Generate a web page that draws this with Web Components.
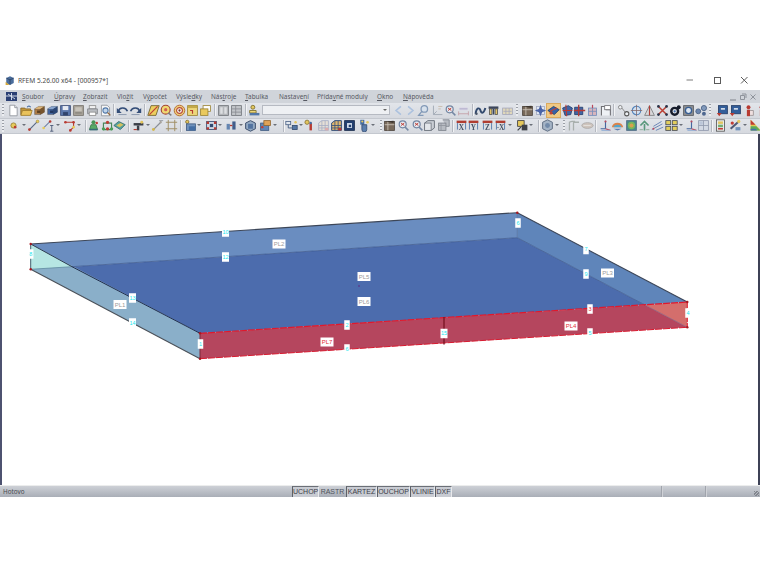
<!DOCTYPE html>
<html lang="cs">
<head>
<meta charset="utf-8">
<title>RFEM</title>
<style>
  html, body { margin: 0; background: #fff; }
  body { padding-top: 70px; height: 500px; overflow: hidden; font-family: "Noto Sans", sans-serif; }
</style>
</head>
<body>
<rfem-window>
  <rfem-titlebar>RFEM 5.26.00 x64 - [000957*]</rfem-titlebar>
  <rfem-menubar>
    <rfem-menu at="22"><u>S</u>oubor</rfem-menu>
    <rfem-menu at="54"><u>Ú</u>pravy</rfem-menu>
    <rfem-menu at="83"><u>Z</u>obrazit</rfem-menu>
    <rfem-menu at="117">Vlo<u>ž</u>it</rfem-menu>
    <rfem-menu at="143">V<u>ý</u>počet</rfem-menu>
    <rfem-menu at="176">Výsle<u>d</u>ky</rfem-menu>
    <rfem-menu at="211">Nás<u>t</u>roje</rfem-menu>
    <rfem-menu at="245"><u>T</u>abulka</rfem-menu>
    <rfem-menu at="279">Nastave<u>n</u>í</rfem-menu>
    <rfem-menu at="317">Přída<u>v</u>né moduly</rfem-menu>
    <rfem-menu at="377"><u>O</u>kno</rfem-menu>
    <rfem-menu at="403"><u>N</u>ápověda</rfem-menu>
  </rfem-menubar>
  <rfem-toolbar items="grip:3 doc:13 open:26 stack:39 stackb:52 save:65 saveg:78 print:92 prev:105 sep:113 undo:122 redo:135 sep:144 para:153 lens:166 target:179 winy:192 winy2:205 sep:214 table:223 table2:236 sep:245 person:254 combo:326 left:398 right:410 mag:423 axes:437 magr:450 dim:463 sep:472 curve:480 bench:493 benchp:507 grip:517 brown:527 star:540 hot:553 cubeb:567 cuber:579 gridp:592 frame:605 sep:613 rings:623 circ:636 tri:649 cross:662 ring:675 sqring:688 dots:701 grip:710 blued:722 blued:735 redman:748 redman:761"></rfem-toolbar>
  <rfem-toolbar items="grip:3 node:13 drop:24 line:33 lines:48 drop:58 poly:69 drop:79 sep:85 green1:93 green2:107 green3:119 sep:128 tee:138 drop:148 dimy:157 grid:171 sep:180 boxb:190 drop:199 framer:211 drop:220 arrows:231 drop:241 cube:250 winb:265 drop:275 sep:283 flow:291 drop:301 bar:309 house:323 houseo:336 boxd:349 hyd:363 drop:373 grip:381 brown:389 magr:403 magr:417 cubeg:429 cubeg2:443 sep:452 ax-X:461 ax-Y:473 ax-Z:487 ax--X:500 drop:510 yblack:522 drop:531 sep:538 hex:547 drop:557 grip:564 pale:573 oval:587 sep:595 axisb:605 dome:617 contour:631 arrowg:644 lines2:657 yellow4:671 drop:681 axisb:691 pgrid:703 sep:711 docc:720 tool:735 drop:745 rainbow:755"></rfem-toolbar>
  <rfem-canvas></rfem-canvas>
  <rfem-statusbar>
    <span slot="left">Hotovo</span>
    <rfem-pane w="27">UCHOP</rfem-pane>
    <rfem-pane w="27" flat>RASTR</rfem-pane>
    <rfem-pane w="31">KARTEZ</rfem-pane>
    <rfem-pane w="33">OUCHOP</rfem-pane>
    <rfem-pane w="25">VLINIE</rfem-pane>
    <rfem-pane w="17">DXF</rfem-pane>
  </rfem-statusbar>
</rfem-window>

<script>
// tiny svg helpers, 16x16 box
const R = (x, y, w, h, f, s) => `<rect x="${x}" y="${y}" width="${w}" height="${h}" fill="${f}" stroke="${s || "none"}"/>`;
const P = (d, f, s, w) => `<path d="${d}" fill="${f || "none"}" stroke="${s || "none"}" stroke-width="${w || 1}"/>`;
const C = (x, y, r, f, s, w) => `<circle cx="${x}" cy="${y}" r="${r}" fill="${f}" stroke="${s || "none"}" stroke-width="${w || 1}"/>`;
const T = (t, c) => `<text x="8" y="13" font-family="Liberation Serif, serif" font-weight="700" font-size="9" text-anchor="middle" fill="${c}">${t}</text>`;
const box = (f, top, side) => P("M2 6l5-3h7v7l-5 3H2z", f, "#555", .6) + P("M2 6h7l5-3M9 6v7", "none", "#444", .6) + P("M2 6l5-3h7l-5 3z", top) + P("M9 6l5-3v7l-5 3z", side);
const axis = (t) => R(2, 2, 12, 3, "#c0392b") + P("M3 5v8M13 5v8", "none", "#3d6fb0") + T(t, "#46536a");

const ICONS = {
  doc: P("M3.5 1.5h6l3 3v10h-9z", "#fff", "#8a8f98") + P("M9.5 1.5v3h3", "#e6e8ec", "#8a8f98"),
  open: P("M1 5h5l1 1h6v7H1z", "#c9952b", "#8a6518") + P("M3 8h12l-2 6H1z", "#f0c24a", "#a37a20") + P("M9 4c1-2 3-2 4 0", "none", "#2f62a8", 1.4),
  stack: box("#b47a3c", "#e2b36c", "#7c5426") + R(5, 8, 4, 3, "#5f3f1d"),
  stackb: box("#3d67ad", "#83a5d6", "#27477f") + R(5, 8, 4, 3, "#1f3766"),
  save: R(2, 2, 12, 12, "#5676b4", "#3a4f80") + R(4.5, 2.5, 7, 5, "#e6ebf4") + R(5, 10, 6, 4, "#2e4473"),
  saveg: R(2, 2, 12, 12, "#a8a297", "#77726a") + R(4, 4, 8, 5, "#c8c3b9") + P("M4 11h8", "", "#77726a"),
  print: R(4, 2, 8, 4, "#f1f1f1", "#8d8d8d") + P("M2 6h12v6H2z", "#b9bcc2", "#7d8088") + R(4, 10, 8, 4, "#fff", "#8d8d8d"),
  prev: P("M3 1.5h7l3 3v10H3z", "#f6f6f6", "#8a8f98") + C(8, 8, 3.2, "#bcd4ee", "#4a79b3", 1.3) + P("M10.5 10.5l3.5 3.5", "", "#9a6a3a", 1.6),
  undo: P("M3 9c1-5 9-6 11 0", "none", "#2f4d80", 2) + P("M1 5v6h6z", "#2f4d80") + P("M3 13h10", "", "#7a8caa", 1),
  redo: P("M13 9c-1-5-9-6-11 0", "none", "#2f4d80", 2) + P("M15 5v6H9z", "#2f4d80") + P("M3 13h10", "", "#7a8caa", 1),
  para: P("M5 2h10l-4 12H1z", "#f2cf4c", "#6d5b1e") + P("M3 13L13 3", "", "#d13a2e", 1.5),
  lens: C(7, 7, 5.5, "#f4d75f", "#b1402f", 1.4) + C(7, 7, 2, "#e25b4b") + P("M10 11l4 3", "", "#7d7d7d", 1.8),
  target: C(8, 8, 6.5, "#f2cf6a", "#c06a28", 1.2) + C(8, 8, 3.6, "#fff", "#c8442f", 1.4) + C(8, 8, 1.4, "#7a3a22"),
  winy: R(2, 2, 12, 12, "#f1d66b", "#9d8120") + R(2, 2, 12, 3, "#c8a93a") + P("M5 8h3v4", "", "#c7362a", 1.4),
  winy2: R(5, 2, 9, 7, "#fff", "#9d8120") + R(2, 6, 9, 8, "#f0c94a", "#9d8120"),
  table: R(2, 2, 12, 12, "#b4b7bc", "#6f737a") + R(4, 4, 3, 8, "#dcdee1") + R(9, 4, 3, 8, "#dcdee1"),
  table2: R(2, 2, 12, 12, "#c2c5ca", "#6f737a") + P("M2 6h12M2 10h12M7 2v12", "", "#878b92"),
  person: C(6, 4, 2.4, "#e8c84e", "#7b6a20") + P("M2 8h8v3H2z", "#f1d664", "#7b6a20") + R(2, 11, 12, 3, "#4c78b0") ,
  left: P("M11 3L5 8l6 5", "none", "#a9c2e4", 2),
  right: P("M5 3l6 5-6 5", "none", "#a9c2e4", 2),
  mag: C(9, 6, 4, "#d6e1ee", "#7f9abd", 1.6) + P("M6 9l-4 5h6", "", "#7f9abd", 1.6),
  axes: P("M3 2v11h11M3 13l4-4", "none", "#a3adba", 1.2) + P("M9 3h5M9 6h3", "", "#c6b59f"),
  magr: C(7, 6.5, 4.3, "#e4eaf2", "#7187a8", 1.5) + P("M5 5l4 3M9 5L5 8", "", "#d1382d", 1.2) + P("M10 10l4 4", "", "#7187a8", 1.8),
  dim: P("M2 12h12M2 9v5M14 9v5", "", "#c79aa2") + R(3, 4, 10, 4, "#dcd8ea") + P("M3 6h10", "", "#a09dc4"),
  curve: P("M2 12C3 4 7 4 8 8s4 4 6-3", "none", "#2e4a75", 2.4) + C(3, 12, 1.5, "#46536a"),
  bench: R(2, 3, 12, 3, "#3a4660") + R(3, 6, 3, 7, "#e9c65a", "#555") + R(7, 6, 2, 7, "#3a4660") + R(10, 6, 3, 7, "#e9c65a", "#555"),
  benchp: R(2, 5, 12, 8, "#e2d8b5", "#a5a9c0") + P("M3 9h10M6 5v8M10 5v8", "", "#a5a9c0"),
  brown: R(2, 3, 12, 11, "#7b6a58", "#4b4036") + P("M2 7h12M6 3v11", "", "#cfc6b8") + P("M3 3l10-1v3", "#3e352c") ,
  star: R(3, 3, 10, 10, "#dfe7f4", "#a0a9c4") + P("M8 1l2 5 5 2-5 2-2 5-2-5-5-2 5-2z", "#4564b4"),
  hot: P("M1 8l7-5 7 4-6 6z", "#2e63b3", "#1d3b73") + P("M4 9l8-4", "", "#d13c2e", 1.5) + C(5, 11, 2, "#d13c2e"),
  cubeb: P("M2 5l7-3 5 3-2 8-7 1z", "#3b66b0", "#1d3b73") + P("M6 1l1 14M2 8h12", "", "#c9342e", 1.3),
  cuber: P("M2 4h10v9H2z", "#3b66b0", "#1d3b73") + P("M7 1v14M1 8h14", "", "#c9342e", 1.6),
  gridp: R(3, 5, 10, 9, "#dcb4bd", "#6f8fc4") + P("M3 9h10M8 5v9", "", "#6f8fc4") + P("M8 1v4", "", "#c9445a", 1.5),
  frame: P("M3 14V3h6v4h5v7", "#eef1f6", "#6f6f74", 1.3) + R(7, 2, 7, 5, "#fff", "#6f6f74"),
  rings: C(4, 4, 2.2, "#eef1f6", "#777") + C(12, 12, 2.6, "#eef1f6", "#555", 1.3) + P("M6 5l4 5", "", "#777"),
  circ: C(8, 8, 5.2, "#cfe0f4", "#4f86c6", 1.4) + P("M8 1v14M1 8h14", "", "#8a6b6b"),
  tri: P("M8 2l6 12H2z", "#d7d8dc", "#777") + P("M8 2v12", "", "#c23a32", 1.4),
  cross: P("M3 3l10 10M13 3L3 13", "", "#cc3a2c", 1.8) + C(3, 3, 1.7, "#27344e") + C(13, 3, 1.7, "#27344e") + C(3, 13, 1.7, "#27344e") + C(13, 13, 1.7, "#27344e"),
  ring: C(7, 9, 4.2, "none", "#151c2e", 3) + C(12, 4, 2.4, "#151c2e") + C(7, 9, 1.4, "#3e72b8"),
  sqring: R(2, 2, 12, 12, "#8b8d92", "#55585e") + C(8, 8, 3.8, "#dce7f4", "#315f9e", 1.6),
  dots: C(4, 9, 3, "#6888b8", "#3f5c88") + C(11, 5, 3.2, "#7d99c2", "#3f5c88") + C(11, 12, 2.4, "#4a6898"),
  blued: R(3, 2, 11, 10, "#2c5fa5", "#1e3c6e") + R(6, 5, 5, 2, "#d8e4f3") + P("M1 11h6l-3 4z", "#c9362c"),
  redman: C(8, 4, 2.4, "#c9362c") + P("M6 7h4v8H6z", "#c9362c") + P("M10 8h4v6h-4", "#f2dfe0", "#9a8f90"),
  node: C(8, 8, 3.2, "#eccb4a", "#9a7f20") + C(10, 10, 1.6, "#c9362c"),
  line: P("M3 13L13 3", "", "#55698c", 1.4) + C(3, 13, 1.7, "#c9362c") + C(13, 3, 1.7, "#eccb4a", "#9a7f20", .6),
  lines: P("M2 11L10 3", "", "#6d83ad", 1.4) + C(10, 3, 1.6, "#c9362c") + C(2, 11, 1.6, "#eccb4a") + P("M12 8v7M10 8h4M10 15h4", "", "#3b4d74"),
  poly: P("M3 4h10v6l-4 4", "none", "#c9362c", 1.4) + C(3, 4, 1.6, "#c9362c") + C(13, 4, 1.6, "#c9362c") + C(13, 10, 1.6, "#eccb4a") + C(9, 14, 1.6, "#c9362c"),
  green1: C(8, 4, 2.5, "#3e9a4f") + P("M5 7h6l2 6H3z", "#4caf5e", "#2e7a3e") + R(3, 12, 10, 2, "#2f6d7c") + C(12, 5, 1.5, "#d3372e"),
  green2: P("M3 5h10v8H3z", "none", "#3f8a56", 1.4) + C(8, 4, 2, "#d3372e") + C(3, 12, 2, "#3fa24f") + C(13, 12, 2, "#3fa24f") + C(8, 12, 2, "#d3372e"),
  green3: P("M1 8l6-5 8 4-6 6z", "#4aa3a2", "#2e6d6d") + P("M4 8l5-3 4 2-5 3z", "#d9c24c"),
  tee: R(2, 5, 12, 3, "#3a3f4a") + R(6, 8, 3, 6, "#3a3f4a") + C(12, 4, 1.8, "#e7c44c") + P("M2 13h4", "", "#c9362c", 1.4),
  dimy: P("M3 13L12 4", "", "#8a8f98", 1.5) + C(3, 13, 1.8, "#d8b93e") + C(12, 4, 1.4, "#a8a29a") + P("M10 2h5", "", "#8a8f98"),
  grid: P("M4 1v14M12 1v14M1 4h14M1 12h14", "", "#a38e5e", 1.2),
  boxb: C(4, 3.5, 2, "#e7c44c", "#8a7020") + R(3, 6, 11, 8, "#6b93c4", "#3a5a88") + R(6, 9, 8, 5, "#3d6fae"),
  framer: R(2, 3, 12, 10, "#cfd9e8", "#2e4a78", 1) + P("M2 3h3v3H2zM11 3h3v3h-3zM2 10h3v3H2zM11 10h3v3h-3z", "#c9362c") + R(6, 6, 4, 4, "#2e4a78"),
  arrows: R(2, 6, 4, 7, "#5f87bb") + R(9, 3, 4, 10, "#3d5f94") + P("M6 8h3", "", "#c9362c", 1.6),
  cube: P("M2 5l6-3 6 3v7l-6 3-6-3z", "#8fa9c8", "#3b4f72", 1.2) + P("M5 6h6v6H5z", "#4d74a8"),
  winb: R(2, 5, 10, 9, "#5a87c0", "#3a5a88") + R(6, 2, 8, 6, "#e8a24a", "#9a6420") + C(4, 10, 1.5, "#d3372e"),
  flow: R(1, 3, 6, 4, "#dfe6f0", "#49648f") + R(9, 8, 6, 5, "#4f78ae", "#2f4a74") + P("M4 7v4h5", "", "#49648f", 1.2) + C(13, 4, 1.5, "#e7c44c"),
  bar: C(5, 4, 2.6, "#e7c44c", "#8a7020") + R(8, 5, 3, 9, "#c9362c") + C(9.5, 5, 1.5, "#3d6fae"),
  house: P("M2 14V5l4-3h8v12z", "#e6dfd4", "#a5aec9") + P("M2 8h12M2 11h12M6 2v12M10 2v12", "", "#a5aec9") + R(10, 11, 4, 3, "#e4a9a9"),
  houseo: P("M2 14V5l4-3h8v12z", "#e5b65f", "#2d4f85", 1.2) + P("M2 8h12M2 11h12M6 2v12M10 2v12", "", "#2d4f85") + R(10, 11, 4, 3, "#c9362c"),
  boxd: R(2, 2, 12, 12, "#1f3f78", "#142a52") + R(5, 5, 6, 6, "#d8e4f3") + R(7, 7, 3, 3, "#1f3f78"),
  hyd: R(4, 1, 5, 6, "#3d6fae") + C(6.5, 3, 1.3, "#ecc94e") + P("M6 7h6v6a3 3 0 0 1-6 0z", "#547fb5", "#2e4a78") + C(13, 4, 1.6, "#ecc94e"),
  cubeg: P("M2 5l4-3h8v9l-4 3H2z", "#c9ced6", "#6c7480", 1.2) + R(2, 5, 8, 9, "#e3e6eb", "#6c7480"),
  cubeg2: P("M7 1h8v8h-4", "#b7bcc4", "#7a818c") + R(2, 5, 9, 9, "#b7bcc4", "#7a818c") + P("M2 8h9M5 5v9", "", "#8f959f"),
  "ax-X": axis("X"), "ax-Y": axis("Y"), "ax-Z": axis("Z"), "ax--X": axis("-X"),
  yblack: R(2, 2, 8, 7, "#eac84a", "#3a3a3a") + R(7, 7, 7, 7, "#3c4048") + P("M2 14l4-4", "", "#3c4048", 1.5),
  hex: P("M8 1l6 3v8l-6 3-6-3V4z", "#a3b4c9", "#5f6f88", 1.2) + C(8, 8, 3, "#6e8aaf"),
  pale: P("M3 14V4l3-1M8 14V4h6v1M6 3h4", "none", "#a8b0ae", 1.6),
  oval: `<ellipse cx="8" cy="8" rx="7" ry="3.5" fill="#cfc4bc" stroke="#a9a6a4"/>` + P("M3 8h9", "", "#e8e4e0"),
  axisb: P("M8 2v10M8 12H2", "", "#3f68ab", 1.4) + P("M8 12l6 2", "", "#c9445a", 1.4) + P("M3 14h11", "", "#8fb0dc", 1.2) + C(8, 3, 1.3, "#c9445a"),
  dome: P("M1 10C2 3 14 3 15 10z", "#e8813d") + P("M3 10C4 6 12 6 13 10z", "#46a8d8") + P("M3 12h10l-5 2z", "#5b7fb8"),
  contour: R(2, 2, 12, 12, "#3e8a8e", "#4a6c8a") + C(8, 8, 4.5, "#6dbb4f") + C(8, 8, 2.5, "#e0a03c"),
  arrowg: P("M8 14V6M3 8l5-5 5 5", "none", "#4f9a78", 2) + P("M2 13h4M10 13h4", "", "#9ab8a8", 1.4),
  lines2: P("M1 13l13-7M3 9l10-6M6 14l9-4", "", "#6887c0", 1.2) + C(3, 12, 1.2, "#c9445a"),
  yellow4: R(1, 2, 6, 5, "#e7cf4a", "#454a55") + R(9, 2, 6, 5, "#e7cf4a", "#454a55") + R(1, 9, 6, 5, "#e7cf4a", "#454a55") + R(9, 9, 6, 5, "#e7cf4a", "#454a55"),
  pgrid: R(2, 2, 12, 12, "#d2d9e6", "#8f9ab0") + P("M8 2v12M2 8h12", "", "#8f9ab0") + R(3, 3, 4, 4, "#b9c6dc"),
  docc: R(3, 1, 10, 14, "#e9ebe9", "#555") + R(5, 3, 6, 3, "#e7c44c") + R(5, 7, 6, 3, "#6bb06b") + R(5, 11, 6, 2, "#d3372e"),
  tool: P("M2 12L12 3", "", "#4c5a7a", 2.5) + C(12, 3, 2, "#ecc94e") + C(4, 5, 2, "#d3372e") + R(8, 10, 6, 4, "#6b93c4"),
  rainbow: P("M2 1l13 13H2z", "#e7c93a") + P("M2 1l6 6H2z", "#d3372e") + P("M2 9h7l5 5H2z", "#4fae55") + P("M2 12h6l2 2H2z", "#3e6fb8")
};

// window frame, stacks everything vertically
class RfemWindow extends HTMLElement {
  constructor() {
    super();
    this.attachShadow({ mode: "open" }).innerHTML = `
      <style>
        :host { display: flex; flex-direction: column; width: 760px; height: 427px; font-family: "Noto Sans", sans-serif; }
      </style>
      <slot></slot>`;
  }
}

class RfemTitlebar extends HTMLElement {
  constructor() {
    super();
    this.attachShadow({ mode: "open" }).innerHTML = `
      <style>
        :host { display: flex; align-items: center; height: 20px; flex: none; background: #fff; color: #4a4a4a; font-size: 6.6px; padding-left: 5px; }
        .app { width: 10px; height: 11px; margin-right: 3px; }
        .title { flex: 1; }
        .btns { display: flex; }
        .btns svg { display: block; }
      </style>
      <svg class="app" viewBox="0 0 16 16">
        <path d="M8 1l6 3v8l-6 3-6-3V4z" fill="#4a6d9c"/>
        <path d="M2 4l6 3 6-3M8 7v8" stroke="#24344e" fill="none"/>
        <path d="M1 10l6 5H1z" fill="#d4a93a"/>
      </svg>
      <span class="title"><slot></slot></span>
      <span class="btns">
        <svg width="27" height="20" viewBox="0 0 27 20"><path d="M8.500 10h6.500" stroke="#7d7d7d"/></svg>
        <svg width="27" height="20" viewBox="0 0 27 20"><rect x="9.500" y="7.500" width="6" height="6" fill="none" stroke="#5a5a5a"/></svg>
        <svg width="28" height="20" viewBox="0 0 28 20"><path d="M9 7l6.500 6.500M15.500 7L9 13.500" stroke="#5a5a5a"/></svg>
      </span>`;
  }
}

class RfemMenubar extends HTMLElement {
  constructor() {
    super();
    this.attachShadow({ mode: "open" }).innerHTML = `
      <style>
        :host { display: flex; align-items: center; height: 13px; flex: none; background: #d0d4da; position: relative; }
        .logo { position: absolute; left: 6px; top: 2px; width: 11px; height: 9px; background: #2a3f73; overflow: hidden; }
        .mdi { position: absolute; left: 729px; top: 0; display: flex; gap: 2px; }
      </style>
      <span class="logo">
        <svg width="11" height="9" viewBox="0 0 11 9" style="display:block"><path d="M0 4h11M5.500 1v7M2 2l7 5" stroke="#dfe6f2" stroke-width=".9"/></svg>
      </span>
      <slot></slot>
      <span class="mdi">
        <svg width="8" height="13" viewBox="0 0 8 13"><path d="M1 10h6" stroke="#7e838b"/></svg>
        <svg width="8" height="13" viewBox="0 0 8 13"><path d="M1.500 5.500h4v4h-4zM3 4h4v4" fill="none" stroke="#8e939b"/></svg>
        <svg width="8" height="13" viewBox="0 0 8 13"><path d="M1.500 4.500l5 5M6.500 4.500l-5 5" stroke="#8e939b"/></svg>
      </span>`;
  }
}

// menu entries sit in flow, `at` is the wanted left edge of the text
class RfemMenu extends HTMLElement {
  constructor() {
    super();
    this.attachShadow({ mode: "open" }).innerHTML = `
      <style>
        :host { display: block; color: #565962; font-size: 6.4px; line-height: 13px; white-space: nowrap; }
      </style>
      <slot></slot>`;
  }
  connectedCallback() {
    const prev = this.previousElementSibling;
    const prevRight = prev ? prev.getBoundingClientRect().right : 0;
    this.style.marginLeft = (Number(this.getAttribute("at")) - prevRight) + "px";
  }
}

class RfemToolbar extends HTMLElement {
  constructor() {
    super();
    this.attachShadow({ mode: "open" }).innerHTML = `
      <style>
        :host { display: flex; align-items: center; height: 15.500px; flex: none; background: linear-gradient(#e2e5ea, #d6d9df); overflow: hidden; box-sizing: border-box; border-bottom: 1px solid #c4c8cf; }
        svg { display: block; flex: none; width: 13px; height: 13px; filter: blur(.4px) saturate(.85); }
        .sep { flex: none; width: 1px; height: 12px; background: #b4b8c0; box-shadow: 1px 0 #f2f3f5; }
        .grip { flex: none; width: 2px; height: 12px; background: repeating-linear-gradient(#9a9ea6 0 1px, #eceef1 1px 3px); }
        .drop { flex: none; width: 5px; height: 5px; }
        .drop::after { content: ""; display: block; margin-top: 1px; border: 2px solid transparent; border-top: 2px solid #6a6f78; border-bottom: 0; width: 0; }
        .combo { flex: none; width: 128px; height: 10px; box-sizing: border-box; background: #eef0f3; border: 1px solid #b6bac2; position: relative; }
        .combo::after { content: ""; position: absolute; right: 2px; top: 3px; border: 2px solid transparent; border-top: 2.500px solid #666; border-bottom: 0; }
        .hot { background: #f5c877; outline: 1px solid #e3a94e; }
      </style>`;
    const sizes = { sep: 1, grip: 2, drop: 5, combo: 128 };
    let cursor = 0;
    for (const item of this.getAttribute("items").trim().split(/\s+/)) {
      const i = item.lastIndexOf(":");
      const name = item.slice(0, i);
      const center = Number(item.slice(i + 1));
      const w = sizes[name] || 13;
      let el;
      if (sizes[name]) {
        el = document.createElement("span");
        el.className = name;
      } else {
        el = document.createElementNS("http://www.w3.org/2000/svg", "svg");
        el.setAttribute("viewBox", "0 0 16 16");
        el.innerHTML = ICONS[name] || "";
        if (name === "hot") el.setAttribute("class", "hot");
      }
      el.style.marginLeft = (center - w / 2 - cursor) + "px";
      cursor = center + w / 2;
      this.shadowRoot.appendChild(el);
    }
  }
}

class RfemCanvas extends HTMLElement {
  constructor() {
    super();
    const nodeLabels = [
      ["10", 225.5, 232], ["12", 225.5, 257], ["13", 132.5, 298], ["14", 132.5, 323], ["8", 30.7, 254],
      ["1", 200.5, 344], ["2", 347, 325], ["6", 347, 349], ["15", 444, 333.5], ["3", 590, 309, "#e2303a"],
      ["5", 590, 333], ["4", 688, 313], ["6", 518, 223], ["7", 586, 249.5], ["9", 586, 274]
    ];
    const plateLabels = [
      ["PL2", 279, 244, "#9a9a9a"], ["PL5", 364, 276.5, "#9a9a9a"], ["PL6", 364, 301.5, "#9a9a9a"],
      ["PL1", 120, 304.500, "#9a9a9a"], ["PL3", 607.5, 273, "#9a9a9a"], ["PL7", 327, 342, "#e2303a"], ["PL4", 571, 326, "#e2303a"]
    ];
    const y0 = 134;
    const pts = (...a) => a.map(([x, y]) => `${x},${y - y0}`).join(" ");
    const lbl = (t, x, y, c, w, h, fs) =>
      `<rect x="${x - w / 2}" y="${y - y0 - h / 2}" width="${w}" height="${h}" fill="#fff"/>` +
      `<text x="${x}" y="${y - y0 + fs * .36}" fill="${c}" font-size="${fs}" text-anchor="middle">${t}</text>`;
    const seg = (a, b, c, w, dash) =>
      `<line x1="${a[0]}" y1="${a[1] - y0}" x2="${b[0]}" y2="${b[1] - y0}" stroke="${c}" stroke-width="${w}"${dash ? ` stroke-dasharray="${dash}"` : ""}/>`;
    const A = [30.7, 244], B = [30.7, 269.3], C1 = [200, 333.3], D = [200, 358.7];
    const E = [517.3, 212.7], F = [517.3, 237.7], G = [687.3, 302], H = [687.3, 327.3];
    const I = [72, 266.7], J = [645, 305];
    const corners = [A, B, C1, D, E, G, H];
    this.attachShadow({ mode: "open" }).innerHTML = `
      <style>
        :host { display: block; flex: 1; min-height: 0; background: #fff; box-sizing: border-box; border-left: 2px solid #4d5270; border-right: 2px solid #3d4156; }
        svg { display: block; margin-left: -2px; font-family: "Liberation Sans", sans-serif; }
      </style>
      <svg width="760" height="352" viewBox="0 0 760 352">
        <polygon points="${pts(I, F, J, C1)}" fill="#4c6cad"/>
        <polygon points="${pts(A, E, F, I)}" fill="#6a8dc0"/>
        <polygon points="${pts(E, G, J, F)}" fill="#5f85ba"/>
        <polygon points="${pts(A, C1, D, B)}" fill="#8aafc9"/>
        <polygon points="${pts(A, I, B)}" fill="#b6e6e3"/>
        <polygon points="${pts(C1, J, H, D)}" fill="#b5465e"/>
        <polygon points="${pts(J, G, H)}" fill="#d46e6c"/>
        ${seg(I, F, "#3f5a8f", .8)}${seg(F, J, "#3f5a8f", .8)}${seg(E, F, "#4f6f9f", .8)}
        ${seg(J, H, "#8a5a78", .8)}${seg(I, B, "#5f8aa0", .8)}
        ${seg(A, I, "#2c3a50", 1)}${seg(I, C1, "#22304f", 1)}
        ${seg(A, E, "#3c4658", 1.1)}${seg(E, G, "#3c4658", 1.1)}
        ${seg(B, D, "#4a5058", 1.1)}${seg(A, B, "#4a6070", 1)}${seg(C1, D, "#7a2a3a", 1)}
        ${seg(C1, G, "#e0182c", 1.2, "7 1")}${seg(D, H, "#d81a30", 1, "7 1")}${seg(G, H, "#e0182c", 1, "6 1")}
        ${seg([444, 317], [444, 344.500], "#7c1626", 1.4)}
        ${corners.map(p => `<circle cx="${p[0]}" cy="${p[1] - y0}" r="1.200" fill="#a8161f"/>`).join("")}
        <circle cx="359" cy="${286 - y0}" r="1" fill="#5a3f90"/>
        ${plateLabels.map(([t, x, y, c]) => lbl(t, x, y, c, 13, 9, 6)).join("")}
        ${nodeLabels.map(([t, x, y, c]) => lbl(t, x, y, c || "#22e6ee", t.length > 1 ? 7 : 5.5, 9.5, 5.5)).join("")}
      </svg>`;
  }
}

class RfemStatusbar extends HTMLElement {
  constructor() {
    super();
    this.attachShadow({ mode: "open" }).innerHTML = `
      <style>
        :host { display: flex; height: 11px; flex: none; background: linear-gradient(#cdd0d6, #a9aeb7); box-shadow: 0 -1px #eceded; color: #45484f; font-size: 6.3px; position: relative; }
        .left { width: 292px; padding-left: 3px; box-sizing: border-box; line-height: 11px; }
        .panes { display: flex; }
        .rest { flex: 1; display: flex; }
        .rest i { height: 11px; border-left: 1px solid #a0a4ac; box-shadow: 1px 0 #cfd1d6; }
        .rest i:first-child { margin-left: 209px; }
        .rest i:nth-child(2) { margin-left: 43px; }
        .resize { position: absolute; right: 1px; bottom: 1px; width: 5px; height: 5px; background: repeating-linear-gradient(135deg, #82868e 0 1px, transparent 1px 2px); }
      </style>
      <span class="left"><slot name="left"></slot></span>
      <span class="panes"><slot></slot></span>
      <span class="rest"><i></i><i></i></span>
      <span class="resize"></span>`;
  }
}

class RfemPane extends HTMLElement {
  constructor() {
    super();
    this.attachShadow({ mode: "open" }).innerHTML = `
      <style>
        :host { display: block; box-sizing: border-box; text-align: center; line-height: 10px; font-size: 7px; font-family: "Liberation Sans", sans-serif; border-left: 1px solid #5c6068; border-top: 1px solid #6b6f77; border-right: 1px solid #e8e9ec; background: #c8cbd2; color: #3d4048; }
        :host([flat]) { border-color: transparent; background: none; color: #50545c; }
      </style>
      <slot></slot>`;
    this.style.width = this.getAttribute("w") + "px";
  }
}

customElements.define("rfem-window", RfemWindow);
customElements.define("rfem-titlebar", RfemTitlebar);
customElements.define("rfem-menubar", RfemMenubar);
customElements.define("rfem-menu", RfemMenu);
customElements.define("rfem-toolbar", RfemToolbar);
customElements.define("rfem-canvas", RfemCanvas);
customElements.define("rfem-statusbar", RfemStatusbar);
customElements.define("rfem-pane", RfemPane);
</script>
</body>
</html>
